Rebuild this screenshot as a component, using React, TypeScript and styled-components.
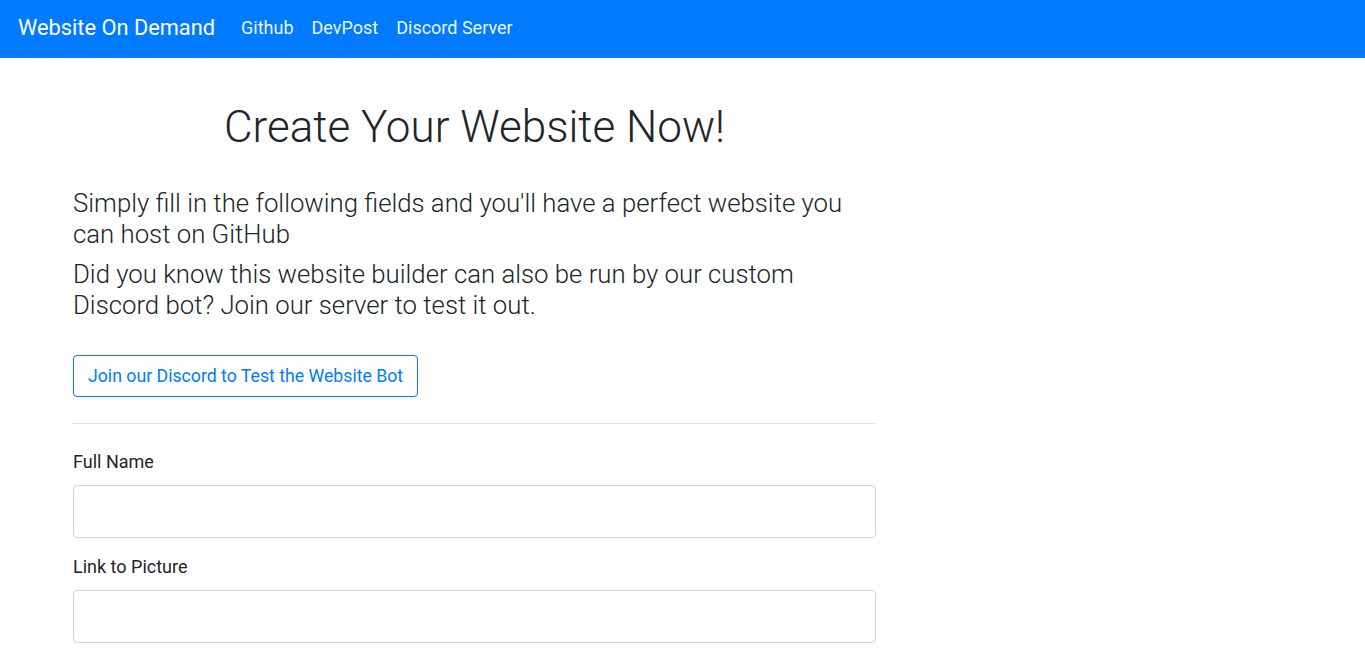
import styled, { createGlobalStyle } from "styled-components";

const GlobalStyle = createGlobalStyle`
  * { box-sizing: border-box; }
  body {
    margin: 0;
    font-family: Roboto, "Liberation Sans", sans-serif;
    color: #212529;
    background: #fff;
  }
`;

const links = ["Github", "DevPost", "Discord Server"];

export default function App() {
  return (
    <>
      <GlobalStyle />
      <Navbar>
        <Brand href="#">Website On Demand</Brand>
        <NavLinks>
          {links.map((l) => (
            <NavLink key={l} href="#">
              {l}
            </NavLink>
          ))}
        </NavLinks>
      </Navbar>
      <Main>
        <Title>Create Your Website Now!</Title>
        <Lead>
          Simply fill in the following fields and you'll have a perfect website
          you can host on GitHub
        </Lead>
        <Lead>
          Did you know this website builder can also be run by our custom
          Discord bot? Join our server to test it out.
        </Lead>
        <OutlineButton type="button">
          Join our Discord to Test the Website Bot
        </OutlineButton>
        <Divider />
        <Field>
          <Label>Full Name</Label>
          <Input type="text" />
        </Field>
        <Field>
          <Label>Link to Picture</Label>
          <Input type="text" />
        </Field>
      </Main>
    </>
  );
}

const Navbar = styled.nav`
  display: flex;
  align-items: center;
  height: 58px;
  padding: 0 18px 4px;
  background: #007bff;
`;

const Brand = styled.a`
  color: #fff;
  font-size: 21.8px;
  text-decoration: none;
  margin-right: 26px;
`;

const NavLinks = styled.div`
  display: flex;
  gap: 18px;
`;

const NavLink = styled.a`
  color: rgba(255, 255, 255, 0.95);
  font-size: 18px;
  text-decoration: none;
`;

const Main = styled.main`
  width: 803px;
  margin-left: 73px;
  padding-top: 43px;
`;

const Title = styled.h1`
  margin: 0 0 34px;
  text-align: center;
  font-size: 44px;
  font-weight: 300;
  line-height: 1.2;
`;

const Lead = styled.p`
  margin: 0 0 9px;
  font-size: 25.75px;
  font-weight: 300;
  line-height: 31px;
`;

const OutlineButton = styled.button`
  margin-top: 25px;
  padding: 8px 14px;
  height: 42px;
  font-family: inherit;
  font-size: 17.7px;
  line-height: 24px;
  color: #007bff;
  background: transparent;
  border: 1px solid #007bff;
  border-radius: 4px;
  cursor: pointer;
`;

const Divider = styled.hr`
  margin: 26px 0 26px;
  border: 0;
  border-top: 1px solid rgba(0, 0, 0, 0.12);
`;

const Field = styled.div`
  display: flex;
  flex-direction: column;
  margin-bottom: 17px;
`;

const Label = styled.label`
  font-size: 18px;
  line-height: 24px;
  margin-bottom: 11px;
`;

const Input = styled.input`
  height: 53px;
  padding: 6px 12px;
  font-family: inherit;
  font-size: 17px;
  border: 1px solid #ced4da;
  border-radius: 4px;
`;
